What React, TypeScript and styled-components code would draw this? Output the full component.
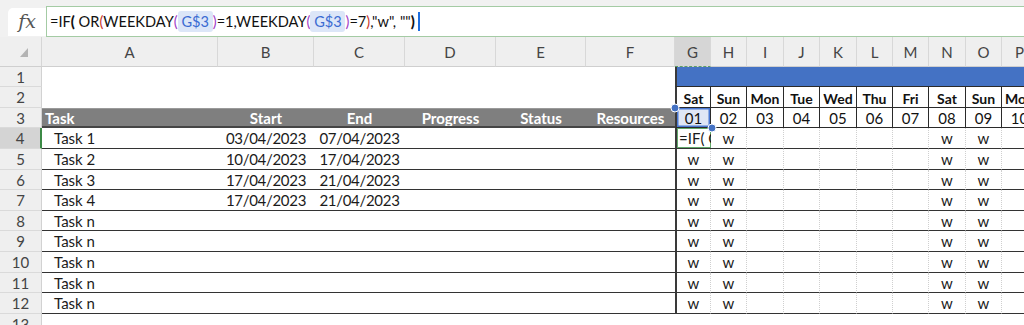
import React from "react";
import styled, { createGlobalStyle, css } from "styled-components";

const Global = createGlobalStyle`
  html, body { margin: 0; padding: 0; background: #ffffff; overflow: hidden; }
  body { font-family: "Lato", "Liberation Sans", sans-serif; color: #1b1b1b; }
  * { box-sizing: border-box; }
`;

const Page = styled.div`
  width: 1024px;
  height: 325px;
  overflow: hidden;
  display: flex;
  flex-direction: column;
`;

/* ---------- formula bar ---------- */
const FormulaBar = styled.div`
  height: 37px;
  flex: none;
  display: flex;
  align-items: flex-end;
  background: #f1f1f1;
  padding-top: 6px;
`;

const FxBox = styled.div`
  width: 38px;
  height: 28px;
  margin-left: 8px;
  margin-bottom: 1px;
  background: #ffffff;
  border-radius: 5px 0 0 0;
  display: flex;
  align-items: center;
  justify-content: center;
  font-family: "DejaVu Serif", "Liberation Serif", serif;
  font-style: italic;
  font-size: 19px;
  color: #555555;
  padding-bottom: 2px;
`;

const FormulaInput = styled.div`
  flex: 1;
  height: 31px;
  background: #ffffff;
  border: 1px solid #a4cba4;
  border-right: none;
  display: flex;
  align-items: center;
  padding-left: 3px;
  font-size: 14.6px;
  color: #111111;
  white-space: pre;
`;

const Paren = styled.span<{ $c?: string; $bold?: boolean }>`
  color: ${(p) => p.$c || "#111111"};
  font-weight: ${(p) => (p.$bold ? 900 : 400)};
`;

const Ref = styled.span`
  color: #3a6bd2;
  background: #dce6f8;
  border-radius: 3px;
  padding: 2px 0;
`;

const Caret = styled.span`
  display: inline-block;
  width: 2px;
  height: 19px;
  margin-left: 3px;
  background: #1d6fe0;
`;

/* ---------- sheet grid ---------- */
const colWidths = [42, 176, 96, 91, 91, 90, 89, 36, 36, 37, 36, 37, 36, 36, 37, 36, 36];
const rowHeights = [30, 20, 21, 20, 21, 21, 20, 21, 20, 21, 21, 20, 21, 21];

const Sheet = styled.div`
  position: relative;
  display: grid;
  grid-template-columns: ${colWidths.map((w) => `${w}px`).join(" ")};
  grid-template-rows: ${rowHeights.map((h) => `${h}px`).join(" ")};
  width: max-content;
`;

const centerText = css`
  display: flex;
  align-items: center;
  white-space: nowrap;
  overflow: hidden;
`;

const Corner = styled.div`
  background: #efefef;
  border-right: 1px solid #d6d6d6;
  border-bottom: 1px solid #cfcfcf;
  position: relative;
  &::after {
    content: "";
    position: absolute;
    left: 20px;
    top: 11px;
    width: 0;
    height: 0;
    border-left: 8px solid transparent;
    border-bottom: 9px solid #b3b3b3;
  }
`;

const ColHead = styled.div<{ $selected?: boolean }>`
  ${centerText};
  justify-content: center;
  font-size: 15px;
  color: #444444;
  background: ${(p) => (p.$selected ? "#d6d6d6" : "#efefef")};
  border-right: 1px solid #d8d8d8;
  border-bottom: ${(p) => (p.$selected ? "1px dashed #5e9e64" : "1px solid #cfcfcf")};
  padding-top: 1px;
`;

const RowHead = styled.div<{ $selected?: boolean }>`
  ${centerText};
  justify-content: center;
  font-size: 15px;
  color: #444444;
  background: ${(p) => (p.$selected ? "#d4d4d4" : "#efefef")};
  border-bottom: 1px solid #dadada;
  border-right: ${(p) => (p.$selected ? "2px solid #3c8a46" : "1px solid #d2d2d2")};
`;

const Blank = styled.div<{ $edge?: boolean }>`
  background: #ffffff;
  border-left: ${(p) => (p.$edge ? "2px solid #3a3a3a" : "none")};
`;

const TitleCell = styled.div<{ $align: "left" | "center" }>`
  ${centerText};
  justify-content: ${(p) => (p.$align === "left" ? "flex-start" : "center")};
  padding-left: ${(p) => (p.$align === "left" ? "3px" : "0")};
  background: #7f7f7f;
  color: #ffffff;
  font-weight: 700;
  font-size: 15px;
  border-top: 1px solid #9a9a9a;
  border-bottom: 2px solid #454545;
`;

const TaskCell = styled.div<{ $align: "left" | "center" }>`
  ${centerText};
  justify-content: ${(p) => (p.$align === "left" ? "flex-start" : "center")};
  padding-left: ${(p) => (p.$align === "left" ? "12px" : "0")};
  letter-spacing: ${(p) => (p.$align === "left" ? "0" : "-0.3px")};
  font-size: 15px;
  color: #1b1b1b;
  background: #ffffff;
  border-bottom: 1px solid #333333;
`;

const BandCell = styled.div<{ $edge?: boolean }>`
  background: #4472c4;
  border-left: ${(p) => (p.$edge ? "2px solid #3a3a3a" : "none")};
  border-bottom: 1px solid #2a2a2a;
`;

const DayCell = styled.div<{ $edge?: boolean }>`
  ${centerText};
  justify-content: center;
  font-weight: 700;
  font-size: 14px;
  color: #111111;
  border-left: ${(p) => (p.$edge ? "2px solid #3a3a3a" : "none")};
  border-right: 1px solid #2a2a2a;
  border-bottom: 1px solid #2a2a2a;
  padding-top: 2px;
`;

const DateNumCell = styled.div<{ $edge?: boolean; $selected?: boolean }>`
  ${centerText};
  justify-content: center;
  font-size: 15px;
  color: #111111;
  border-left: ${(p) => (p.$edge ? "2px solid #3a3a3a" : "none")};
  border-right: 1px solid #2a2a2a;
  border-bottom: 1px solid #2a2a2a;
  background: ${(p) => (p.$selected ? "#dfe6f5" : "#ffffff")};
  box-shadow: ${(p) => (p.$selected ? "inset 0 0 0 1.5px #4a78d2" : "none")};
`;

const GanttCell = styled.div<{ $edge?: boolean }>`
  ${centerText};
  justify-content: center;
  font-size: 15px;
  color: #1b1b1b;
  border-left: ${(p) => (p.$edge ? "2px solid #3a3a3a" : "none")};
  border-right: 1px dotted #cfcfcf;
  border-bottom: 1px solid #333333;
`;

const EditCell = styled.div`
  ${centerText};
  justify-content: flex-start;
  padding-left: 2px;
  font-size: 15px;
  color: #1b1b1b;
  border-left: 2px solid #3a3a3a;
  border-bottom: 1px solid #333333;
  box-shadow: inset 0 0 0 1px #62a86a;
`;

const Handle = styled.div`
  position: absolute;
  width: 9px;
  height: 9px;
  border-radius: 50%;
  background: #4472c4;
  border: 1px solid #ffffff;
  transform: translate(-50%, -50%);
`;

const colLetters = ["A", "B", "C", "D", "E", "F", "G", "H", "I", "J", "K", "L", "M", "N", "O", "P"];
const dayNames = ["Sat", "Sun", "Mon", "Tue", "Wed", "Thu", "Fri", "Sat", "Sun", "Mon"];
const titles: { text: string; align: "left" | "center" }[] = [
  { text: "Task", align: "left" },
  { text: "Start", align: "center" },
  { text: "End", align: "center" },
  { text: "Progress", align: "center" },
  { text: "Status", align: "center" },
  { text: "Resources", align: "center" },
];
const tasks: [string, string, string][] = [
  ["Task 1", "03/04/2023", "07/04/2023"],
  ["Task 2", "10/04/2023", "17/04/2023"],
  ["Task 3", "17/04/2023", "21/04/2023"],
  ["Task 4", "17/04/2023", "21/04/2023"],
  ["Task n", "", ""],
  ["Task n", "", ""],
  ["Task n", "", ""],
  ["Task n", "", ""],
  ["Task n", "", ""],
];
const weekendCols = [0, 1, 7, 8];

export default function App() {
  const cells: React.ReactNode[] = [];

  cells.push(<Corner key="corner" />);
  colLetters.forEach((l, i) => {
    cells.push(
      <ColHead key={`ch-${l}`} $selected={i === 6}>
        {l}
      </ColHead>
    );
  });

  for (let r = 1; r <= 13; r++) {
    cells.push(
      <RowHead key={`rh-${r}`} $selected={r === 4}>
        {r}
      </RowHead>
    );
    for (let c = 0; c < 6; c++) {
      const k = `c-${r}-${c}`;
      if (r === 3) {
        cells.push(
          <TitleCell key={k} $align={titles[c].align}>
            {titles[c].text}
          </TitleCell>
        );
      } else if (r >= 4 && r <= 12) {
        const t = tasks[r - 4];
        const text = c === 0 ? t[0] : c === 1 ? t[1] : c === 2 ? t[2] : "";
        cells.push(
          <TaskCell key={k} $align={c === 0 ? "left" : "center"}>
            {text}
          </TaskCell>
        );
      } else {
        cells.push(<Blank key={k} />);
      }
    }
    for (let g = 0; g < 10; g++) {
      const k = `g-${r}-${g}`;
      const edge = g === 0 && r <= 12;
      if (r === 1) {
        cells.push(<BandCell key={k} $edge={edge} />);
      } else if (r === 2) {
        cells.push(
          <DayCell key={k} $edge={edge}>
            {dayNames[g]}
          </DayCell>
        );
      } else if (r === 3) {
        cells.push(
          <DateNumCell key={k} $edge={edge} $selected={g === 0}>
            {String(g + 1).padStart(2, "0")}
          </DateNumCell>
        );
      } else if (r === 4 && g === 0) {
        cells.push(<EditCell key={k}>=IF( O</EditCell>);
      } else if (r >= 4 && r <= 12) {
        cells.push(
          <GanttCell key={k} $edge={edge}>
            {weekendCols.includes(g) ? "w" : ""}
          </GanttCell>
        );
      } else {
        cells.push(<Blank key={k} />);
      }
    }
  }

  const red = "#c8352b";
  const purple = "#a23cc6";

  return (
    <Page>
      <Global />
      <FormulaBar>
        <FxBox>fx</FxBox>
        <FormulaInput>
          =IF<Paren $bold>(</Paren> OR<Paren $c={red}>(</Paren>WEEKDAY<Paren $c={purple}>(</Paren>
          <Ref> G$3 </Ref>
          <Paren $c={purple}>)</Paren>=1,WEEKDAY<Paren $c={purple}>(</Paren>
          <Ref> G$3 </Ref>
          <Paren $c={purple}>)</Paren>=7<Paren $c={red}>)</Paren>,"w", ""<Paren $bold>)</Paren>
          <Caret />
        </FormulaInput>
      </FormulaBar>
      <Sheet>
        {cells}
        <Handle style={{ left: 675, top: 71 }} />
        <Handle style={{ left: 712, top: 91 }} />
      </Sheet>
    </Page>
  );
}
